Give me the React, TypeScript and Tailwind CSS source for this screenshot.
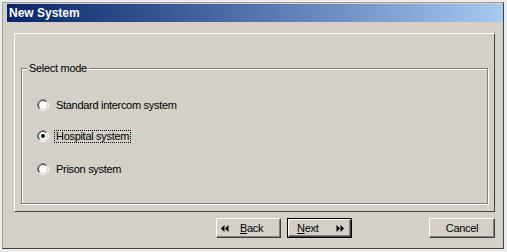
import React from "react";

const Radio = ({ checked }: { checked: boolean }) => (
  <svg width="12" height="12" viewBox="0 0 12 12" className="shrink-0">
    <defs>
      <linearGradient id="rOuter" x1="0" y1="0" x2="1" y2="1">
        <stop offset="0.5" stopColor="#808080" />
        <stop offset="0.5" stopColor="#ffffff" />
      </linearGradient>
      <linearGradient id="rInner" x1="0" y1="0" x2="1" y2="1">
        <stop offset="0.5" stopColor="#404040" />
        <stop offset="0.5" stopColor="#d4d0c8" />
      </linearGradient>
    </defs>
    <circle cx="6" cy="6" r="5.5" fill="none" stroke="url(#rOuter)" strokeWidth="1" />
    <circle cx="6" cy="6" r="4.5" fill="#ffffff" stroke="url(#rInner)" strokeWidth="1" />
    {checked && <circle cx="6" cy="6" r="2" fill="#000000" />}
  </svg>
);

const LeftArrows = () => (
  <svg width="8" height="7" viewBox="0 0 8 7" className="shrink-0">
    <polygon points="3.5,0 0,3.5 3.5,7" fill="#000" />
    <polygon points="7.5,0 4,3.5 7.5,7" fill="#000" />
  </svg>
);

const RightArrows = () => (
  <svg width="8" height="7" viewBox="0 0 8 7" className="shrink-0">
    <polygon points="0.5,0 4,3.5 0.5,7" fill="#000" />
    <polygon points="4.5,0 8,3.5 4.5,7" fill="#000" />
  </svg>
);

const RadioRow = ({
  label,
  checked,
  focused,
  className,
}: {
  label: string;
  checked: boolean;
  focused?: boolean;
  className?: string;
}) => (
  <div className={"flex items-center h-[12px] pl-[15px] " + (className ?? "")}>
    <Radio checked={checked} />
    <span
      className={
        "ml-[5px] px-[1px] leading-[11px] border border-dotted " +
        (focused ? "border-[#000000]" : "border-transparent")
      }
    >
      {label}
    </span>
  </div>
);

export default function App() {
  return (
    <div className="w-[507px] h-[252px] bg-[#ececec] pt-[2px] pl-[2px] font-['Liberation_Sans',Arial,sans-serif] text-[11px] tracking-[-0.3px] text-black">
      <div className="w-[502px] h-[247px] bg-[#d4d0c8] border border-t-[#a0a0a0] border-l-[#a0a0a0] border-r-[#404040] border-b-[#404040] flex flex-col">
        <div className="ml-[4px] mt-[1px] h-[18px] bg-gradient-to-r from-[#0a246a] to-[#a6caf0] flex items-center pl-[2px] text-white font-bold text-[12px] tracking-normal">
          New System
        </div>
        <div className="ml-[11px] mt-[11px] w-[481px] h-[179px] border border-t-white border-l-white border-r-[#404040] border-b-[#404040] pt-[34px] pl-[6px]">
          <div className="relative w-[467px] h-[136px] border border-[#808080] shadow-[inset_1px_1px_0_#ffffff,1px_1px_0_#ffffff] pt-[30px]">
            <span className="absolute left-[5px] -top-[7px] px-[2px] bg-[#d4d0c8] leading-[13px]">
              Select mode
            </span>
            <RadioRow label="Standard intercom system" checked={false} />
            <RadioRow label="Hospital system" checked={true} focused className="mt-[19px]" />
            <RadioRow label="Prison system" checked={false} className="mt-[21px]" />
          </div>
        </div>
        <div className="flex mt-[6px] ml-[213px]">
          <div className="w-[65px] h-[20px] flex items-center pl-[4px] border border-t-white border-l-white border-r-[#404040] border-b-[#404040] shadow-[inset_-1px_-1px_0_#808080]">
            <LeftArrows />
            <span className="ml-[11px]">
              <span className="underline underline-offset-[1px]">B</span>ack
            </span>
          </div>
          <div className="ml-[6px] w-[65px] h-[20px] border border-black">
            <div className="w-full h-full flex items-center justify-between pl-[8px] pr-[6px] border border-t-white border-l-white border-r-[#404040] border-b-[#404040] shadow-[inset_-1px_-1px_0_#808080]">
              <span>
                <span className="underline underline-offset-[1px]">N</span>ext
              </span>
              <RightArrows />
            </div>
          </div>
          <div className="ml-[77px] w-[66px] h-[20px] flex items-center justify-center border border-t-white border-l-white border-r-[#404040] border-b-[#404040] shadow-[inset_-1px_-1px_0_#808080]">
            Cancel
          </div>
        </div>
      </div>
    </div>
  );
}
